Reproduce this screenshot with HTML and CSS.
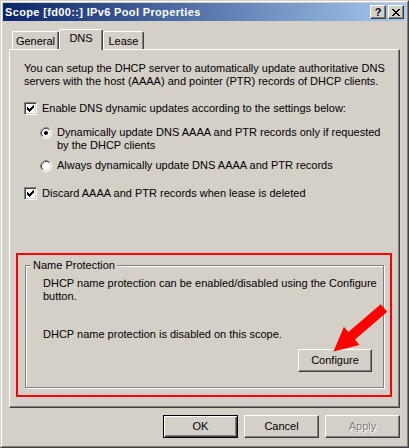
FILE: index.html
```html
<!DOCTYPE html>
<html>
<head>
<meta charset="utf-8">
<title>Scope [fd00::] IPv6 Pool Properties</title>
<link rel="stylesheet" href="styles.css">
</head>
<body>
<div class="window">
  <div class="frame">
    <div class="titlebar">
      <span class="title">Scope [fd00::] IPv6 Pool Properties</span>
      <div class="tbtns">
        <span class="tbtn help">?</span>
        <span class="tbtn close"><svg width="8" height="7" viewBox="0 0 8 7" shape-rendering="crispEdges"><path d="M0 0h2v1h-2zM1 1h2v1h-2zM2 2h4v1h-4zM3 3h2v1h-2zM2 4h4v1h-4zM1 5h2v1h-2zM0 6h2v1h-2zM6 0h2v1h-2zM5 1h2v1h-2zM5 5h2v1h-2zM6 6h2v1h-2z" fill="#000"/></svg></span>
      </div>
    </div>
    <div class="client">
      <div class="tabs">
        <div class="tab t-general">General</div>
        <div class="tab t-dns active">DNS</div>
        <div class="tab t-lease">Lease</div>
      </div>
      <div class="panel">
        <p class="intro">You can setup the DHCP server to automatically update authoritative DNS<br>servers with the host (AAAA) and pointer (PTR) records of DHCP clients.</p>
        <div class="opt check-row first-check">
          <span class="checkbox"><svg width="13" height="13" viewBox="0 0 13 13" shape-rendering="crispEdges"><path d="M3 5H4V6H5V7H6V6H7V5H8V4H9V3H10V6H9V7H8V8H7V9H6V10H5V9H4V8H3Z" fill="#000"/></svg></span>
          <span>Enable DNS dynamic updates according to the settings below:</span>
        </div>
        <div class="opt radio-row radio-first">
          <span class="radio"><svg width="12" height="12" viewBox="0 0 12 12"><circle cx="6" cy="6" r="5.5" fill="#fff" stroke="#fff"/><path d="M2.11 9.89A5.5 5.5 0 0 1 9.89 2.11" fill="none" stroke="#808080"/><circle cx="6" cy="6" r="4.5" fill="#fff" stroke="#d4d0c8"/><path d="M2.82 9.18A4.5 4.5 0 0 1 9.18 2.82" fill="none" stroke="#404040"/><circle cx="6" cy="6" r="2" fill="#000"/></svg></span>
          <span>Dynamically update DNS AAAA and PTR records only if requested<br>by the DHCP clients</span>
        </div>
        <div class="opt radio-row radio-second">
          <span class="radio"><svg width="12" height="12" viewBox="0 0 12 12"><circle cx="6" cy="6" r="5.5" fill="#fff" stroke="#fff"/><path d="M2.11 9.89A5.5 5.5 0 0 1 9.89 2.11" fill="none" stroke="#808080"/><circle cx="6" cy="6" r="4.5" fill="#fff" stroke="#d4d0c8"/><path d="M2.82 9.18A4.5 4.5 0 0 1 9.18 2.82" fill="none" stroke="#404040"/></svg></span>
          <span>Always dynamically update DNS AAAA and PTR records</span>
        </div>
        <div class="opt check-row second-check">
          <span class="checkbox"><svg width="13" height="13" viewBox="0 0 13 13" shape-rendering="crispEdges"><path d="M3 5H4V6H5V7H6V6H7V5H8V4H9V3H10V6H9V7H8V8H7V9H6V10H5V9H4V8H3Z" fill="#000"/></svg></span>
          <span>Discard AAAA and PTR records when lease is deleted</span>
        </div>
        <div class="highlight">
          <fieldset class="group">
            <legend>Name Protection</legend>
            <div class="gbody">
              <p class="gtext">DHCP name protection can be enabled/disabled using the Configure<br>button.</p>
              <p class="gstatus">DHCP name protection is disabled on this scope.</p>
              <button class="btn configure">Configure</button>
            </div>
          </fieldset>
        </div>
      </div>
      <div class="buttons">
        <button class="btn default">OK</button>
        <button class="btn">Cancel</button>
        <button class="btn disabled">Apply</button>
      </div>
    </div>
  </div>
  <svg class="arrow" width="409" height="448" viewBox="0 0 409 448"><polygon points="380.7,304.2 387.3,311.8 355,339.6 359.5,344.9 333.5,351.5 343.9,326.7 348.4,332" fill="#ff0000"/></svg>
</div>
</body>
</html>
```
FILE: styles.css
```css
* { box-sizing: border-box; }
html, body { margin: 0; padding: 0; }
body {
  background: #d4d0c8;
  font-family: "Liberation Sans", Arial, sans-serif;
  font-size: 11px;
  line-height: 13px;
  color: #000;
}
p { margin: 0; white-space: nowrap; }

.window {
  position: relative;
  width: 409px;
  height: 448px;
  border: 1px solid;
  border-color: #d4d0c8 #404040 #404040 #d4d0c8;
}
.frame {
  height: 100%;
  border: 1px solid;
  border-color: #fff #808080 #808080 #fff;
  padding: 1px;
  display: flex;
  flex-direction: column;
}

.titlebar {
  height: 18px;
  flex: none;
  background: linear-gradient(to right, #0a246a, #a6caf0);
  display: flex;
  align-items: center;
  justify-content: space-between;
  padding: 0 2px;
}
.title {
  color: #fff;
  font-weight: bold;
  font-size: 11px;
  letter-spacing: 0.35px;
  white-space: nowrap;
}
.tbtns { display: flex; gap: 2px; }
.tbtn {
  width: 16px;
  height: 14px;
  background: #d4d0c8;
  border: 1px solid;
  border-color: #fff #404040 #404040 #fff;
  box-shadow: inset -1px -1px #808080;
  display: flex;
  align-items: center;
  justify-content: center;
  font-weight: bold;
  font-size: 11px;
  line-height: 12px;
}
.tbtn svg { display: block; }

.client {
  flex: 1;
  padding: 8px 6px 0 6px;
}

.tabs {
  display: flex;
  align-items: flex-end;
  height: 20px;
  padding-left: 3px;
}
.tab {
  height: 18px;
  border: 1px solid;
  border-bottom: none;
  border-color: #fff #404040 #404040 #fff;
  border-radius: 2px 2px 0 0;
  box-shadow: inset -1px 0 #808080;
  background: #d4d0c8;
  display: flex;
  align-items: center;
  justify-content: center;
  padding-top: 2px;
}
.t-general { width: 47px; }
.t-dns { width: 44px; }
.t-lease { width: 41px; }
.tab.active {
  height: 21px;
  margin-bottom: -1px;
  position: relative;
  z-index: 1;
  padding-top: 0;
  padding-bottom: 3px;
}

.panel {
  width: 391px;
  height: 359px;
  border: 1px solid;
  border-color: #fff #404040 #404040 #fff;
  box-shadow: inset -1px -1px #808080;
  padding: 12px 14px 0 14px;
}

.opt { display: flex; align-items: flex-start; white-space: nowrap; }
.check-row { gap: 5px; }
.first-check { margin-top: 14px; }
.second-check { margin-top: 15px; }
.radio-row { gap: 5px; padding-left: 16px; }
.radio-first { margin-top: 11px; }
.radio-second { margin-top: 7px; }

.checkbox {
  width: 13px;
  height: 13px;
  flex: none;
  background: #fff;
  border: 1px solid;
  border-color: #808080 #fff #fff #808080;
  box-shadow: inset 1px 1px #404040, inset -1px -1px #d4d0c8;
  position: relative;
}
.checkbox svg { position: absolute; left: -1px; top: -1px; }
.radio { width: 12px; height: 12px; flex: none; margin-top: 1px; }
.radio svg { display: block; }

.highlight {
  margin-top: 53px;
  margin-left: -8px;
  width: 376px;
  border: 2px solid #ff0000;
}
.group {
  margin: 4px 6px 7px 7px;
  padding: 5px 11px 15px 5px;
  border: 1px solid #808080;
  box-shadow: inset 1px 1px #fff, 1px 1px #fff;
  min-width: 0;
}
.group legend {
  padding: 0 2px;
  background: #d4d0c8;
  line-height: 13px;
}
.gbody {
  display: flex;
  flex-direction: column;
  padding-left: 12px;
}
.gstatus { margin-top: 25px; }

.btn {
  width: 75px;
  height: 23px;
  padding: 0;
  font: inherit;
  color: #000;
  background: #d4d0c8;
  border: 1px solid;
  border-color: #fff #404040 #404040 #fff;
  box-shadow: inset -1px -1px #808080;
}
.configure {
  width: 74px;
  align-self: flex-end;
  margin-top: 8px;
}
.buttons {
  display: flex;
  justify-content: flex-end;
  gap: 6px;
  margin-top: 7px;
}
.btn.default {
  border-color: #000;
  box-shadow: inset 1px 1px #fff, inset -1px -1px #404040, inset -2px -2px #808080;
}
.btn.disabled {
  color: #808080;
  text-shadow: 1px 1px #fff;
}

.arrow {
  position: absolute;
  left: -1px;
  top: -1px;
  pointer-events: none;
}
```
